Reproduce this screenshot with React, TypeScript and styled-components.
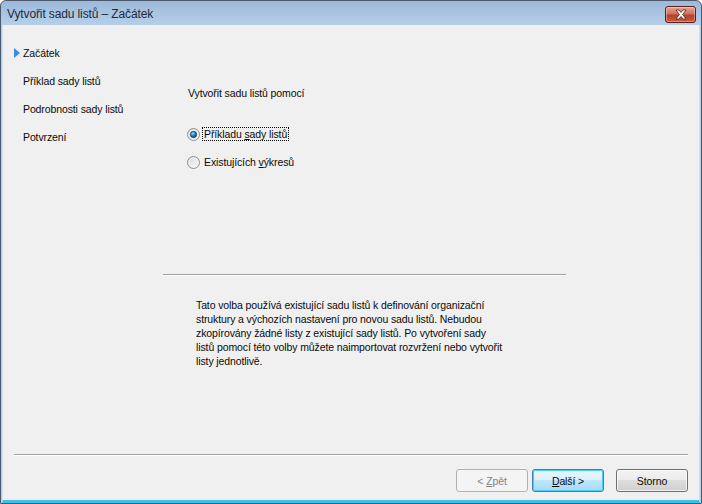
import React, { useState } from 'react';
import styled, { createGlobalStyle, css } from 'styled-components';

const GlobalStyle = createGlobalStyle`
  html, body {
    margin: 0;
    padding: 0;
    background: #ffffff;
  }
  * {
    box-sizing: border-box;
  }
`;

const Window = styled.div`
  width: 702px;
  height: 504px;
  display: flex;
  flex-direction: column;
  border: 1px solid #4a5a6c;
  border-radius: 6px 6px 0 0;
  background: linear-gradient(#9db9d9, #b6cee8 24px, #b9d1ea);
  font-family: 'Liberation Sans', Arial, sans-serif;
  font-size: 10.5px;
  letter-spacing: -0.11px;
  color: #0a0a0a;
  overflow: hidden;
`;

const TitleBar = styled.div`
  height: 24px;
  flex: none;
  display: flex;
  align-items: center;
  justify-content: space-between;
  padding: 0 4px 0 6px;
`;

const Title = styled.span`
  font-family: 'Liberation Sans', Arial, sans-serif;
  font-size: 12px;
  letter-spacing: -0.12px;
  color: #1e2a38;
  padding-top: 2px;
`;

const CloseButton = styled.div`
  width: 31px;
  height: 17px;
  margin-top: 2px;
  margin-right: 1px;
  border: 1px solid #5a1e16;
  border-radius: 3px;
  background: linear-gradient(#e7a597, #d1705c 45%, #b8412b 55%, #c75a3f);
  box-shadow: inset 0 0 0 1px rgba(255, 255, 255, 0.35);
  display: flex;
  align-items: center;
  justify-content: center;
`;

const Client = styled.div`
  flex: 1;
  display: flex;
  flex-direction: column;
  margin: 0 1px 0 1px;
  border-left: 1px solid #cfe0f2;
  border-right: 1px solid #cfe0f2;
  border-bottom: 3px solid #3cc2ea;
  background: #f0f0f0;
`;

const Main = styled.div`
  flex: 1;
  display: flex;
`;

const Sidebar = styled.nav`
  width: 160px;
  flex: none;
  padding-top: 14px;
`;

const NavItem = styled.div`
  height: 28px;
  display: flex;
  align-items: center;
  padding-left: 11px;
`;

const Marker = styled.span<{ $active?: boolean }>`
  width: 9px;
  height: 10px;
  flex: none;
  ${(p) =>
    p.$active &&
    css`
      &::before {
        content: '';
        display: block;
        width: 0;
        height: 0;
        border-top: 5px solid transparent;
        border-bottom: 5px solid transparent;
        border-left: 6px solid #3a8ee8;
      }
    `}
`;

const Content = styled.section`
  width: 403px;
  flex: none;
  display: flex;
  flex-direction: column;
`;

const Prompt = styled.div`
  margin-top: 61px;
  padding-left: 25px;
  line-height: 14px;
`;

const Options = styled.div`
  margin-top: 27px;
  padding-left: 24px;
  display: flex;
  flex-direction: column;
  gap: 14px;
`;

const RadioRow = styled.label`
  height: 14px;
  display: flex;
  align-items: center;
  gap: 2px;
  cursor: default;
`;

const RadioLabel = styled.span<{ $focused?: boolean }>`
  line-height: 12px;
  padding: 0 1px;
  border: 1px dotted ${(p) => (p.$focused ? '#000000' : 'transparent')};
`;

const Key = styled.span`
  text-decoration: underline;
`;

const Separator = styled.div<{ $top?: number; $inset?: number }>`
  height: 2px;
  margin-top: ${(p) => p.$top ?? 0}px;
  margin-left: ${(p) => p.$inset ?? 0}px;
  margin-right: ${(p) => p.$inset ?? 0}px;
  border-top: 1px solid #a0a0a0;
  border-bottom: 1px solid #ffffff;
`;

const Description = styled.p`
  margin: 22px 0 0 33px;
  line-height: 14px;
`;

const Footer = styled.div`
  flex: none;
  display: flex;
  flex-direction: column;
  padding-bottom: 8px;
`;

const ButtonRow = styled.div`
  margin-top: 13px;
  padding-right: 11px;
  display: flex;
  justify-content: flex-end;
  gap: 4px;
`;

const Button = styled.div<{ $variant?: 'default' | 'disabled' | 'normal'; $gapBefore?: number }>`
  width: 72px;
  height: 23px;
  margin-left: ${(p) => p.$gapBefore ?? 0}px;
  display: flex;
  align-items: center;
  justify-content: center;
  border-radius: 3px;
  border: 1px solid #707070;
  background: linear-gradient(#f2f2f2, #ebebeb 50%, #dddddd 50%, #cfcfcf);
  box-shadow: inset 0 0 0 1px rgba(255, 255, 255, 0.7);
  ${(p) =>
    p.$variant === 'default' &&
    css`
      border-color: #3c7fb1;
      background: linear-gradient(#eaf6fd, #d9f0fc 50%, #bee6fd 50%, #a7d9f5);
      box-shadow: inset 0 0 0 1px #48d0f8;
    `}
  ${(p) =>
    p.$variant === 'disabled' &&
    css`
      border-color: #adb2b5;
      background: #f4f4f4;
      color: #838383;
      box-shadow: none;
    `}
`;

const RadioIcon = ({ checked }: { checked?: boolean }) => (
  <svg width="13" height="13" viewBox="0 0 13 13">
    <defs>
      <linearGradient id="rbg" x1="0" y1="0" x2="1" y2="1">
        <stop offset="0" stopColor="#d8d8d8" />
        <stop offset="1" stopColor="#fbfbfb" />
      </linearGradient>
      <radialGradient id="rdot" cx="0.4" cy="0.35" r="0.7">
        <stop offset="0" stopColor="#8fe0ff" />
        <stop offset="0.5" stopColor="#1c7fc0" />
        <stop offset="1" stopColor="#0a3f6b" />
      </radialGradient>
    </defs>
    <circle cx="6.5" cy="6.5" r="6" fill="url(#rbg)" stroke="#8e8f8f" strokeWidth="1" />
    <circle cx="6.5" cy="6.5" r="4.5" fill="none" stroke="#f4f4f4" strokeWidth="1" />
    {checked && <circle cx="6.5" cy="6.5" r="3.2" fill="url(#rdot)" stroke="#10395a" strokeWidth="0.6" />}
  </svg>
);

const CloseIcon = () => (
  <svg width="14" height="11" viewBox="0 0 14 11">
    <path
      d="M2 1 L5 1 L7 3.5 L9 1 L12 1 L8.6 5.5 L12 10 L9 10 L7 7.5 L5 10 L2 10 L5.4 5.5 Z"
      fill="#ffffff"
      stroke="#4a2a24"
      strokeWidth="0.8"
      strokeLinejoin="round"
    />
  </svg>
);

const steps = ['Začátek', 'Příklad sady listů', 'Podrobnosti sady listů', 'Potvrzení'];

const App = () => {
  const [choice, setChoice] = useState<'example' | 'drawings'>('example');

  return (
    <>
      <GlobalStyle />
      <Window>
        <TitleBar>
          <Title>Vytvořit sadu listů – Začátek</Title>
          <CloseButton>
            <CloseIcon />
          </CloseButton>
        </TitleBar>
        <Client>
          <Main>
            <Sidebar>
              {steps.map((s, i) => (
                <NavItem key={s}>
                  <Marker $active={i === 0} />
                  {s}
                </NavItem>
              ))}
            </Sidebar>
            <Content>
              <Prompt>Vytvořit sadu listů pomocí</Prompt>
              <Options>
                <RadioRow onClick={() => setChoice('example')}>
                  <RadioIcon checked={choice === 'example'} />
                  <RadioLabel $focused={choice === 'example'}>
                    Příkladu <Key>s</Key>ady listů
                  </RadioLabel>
                </RadioRow>
                <RadioRow onClick={() => setChoice('drawings')}>
                  <RadioIcon checked={choice === 'drawings'} />
                  <RadioLabel $focused={choice === 'drawings'}>
                    Existujících <Key>v</Key>ýkresů
                  </RadioLabel>
                </RadioRow>
              </Options>
              <Separator $top={105} />
              <Description>
                Tato volba používá existující sadu listů k definování organizační
                <br />
                struktury a výchozích nastavení pro novou sadu listů. Nebudou
                <br />
                zkopírovány žádné listy z existující sady listů. Po vytvoření sady
                <br />
                listů pomocí této volby můžete naimportovat rozvržení nebo vytvořit
                <br />
                listy jednotlivě.
              </Description>
            </Content>
          </Main>
          <Footer>
            <Separator $inset={11} />
            <ButtonRow>
              <Button $variant="disabled">
                &lt;&nbsp;<Key>Z</Key>pět
              </Button>
              <Button $variant="default">
                <Key>D</Key>alší &gt;
              </Button>
              <Button $gapBefore={8}>Storno</Button>
            </ButtonRow>
          </Footer>
        </Client>
      </Window>
    </>
  );
};

export default App;
